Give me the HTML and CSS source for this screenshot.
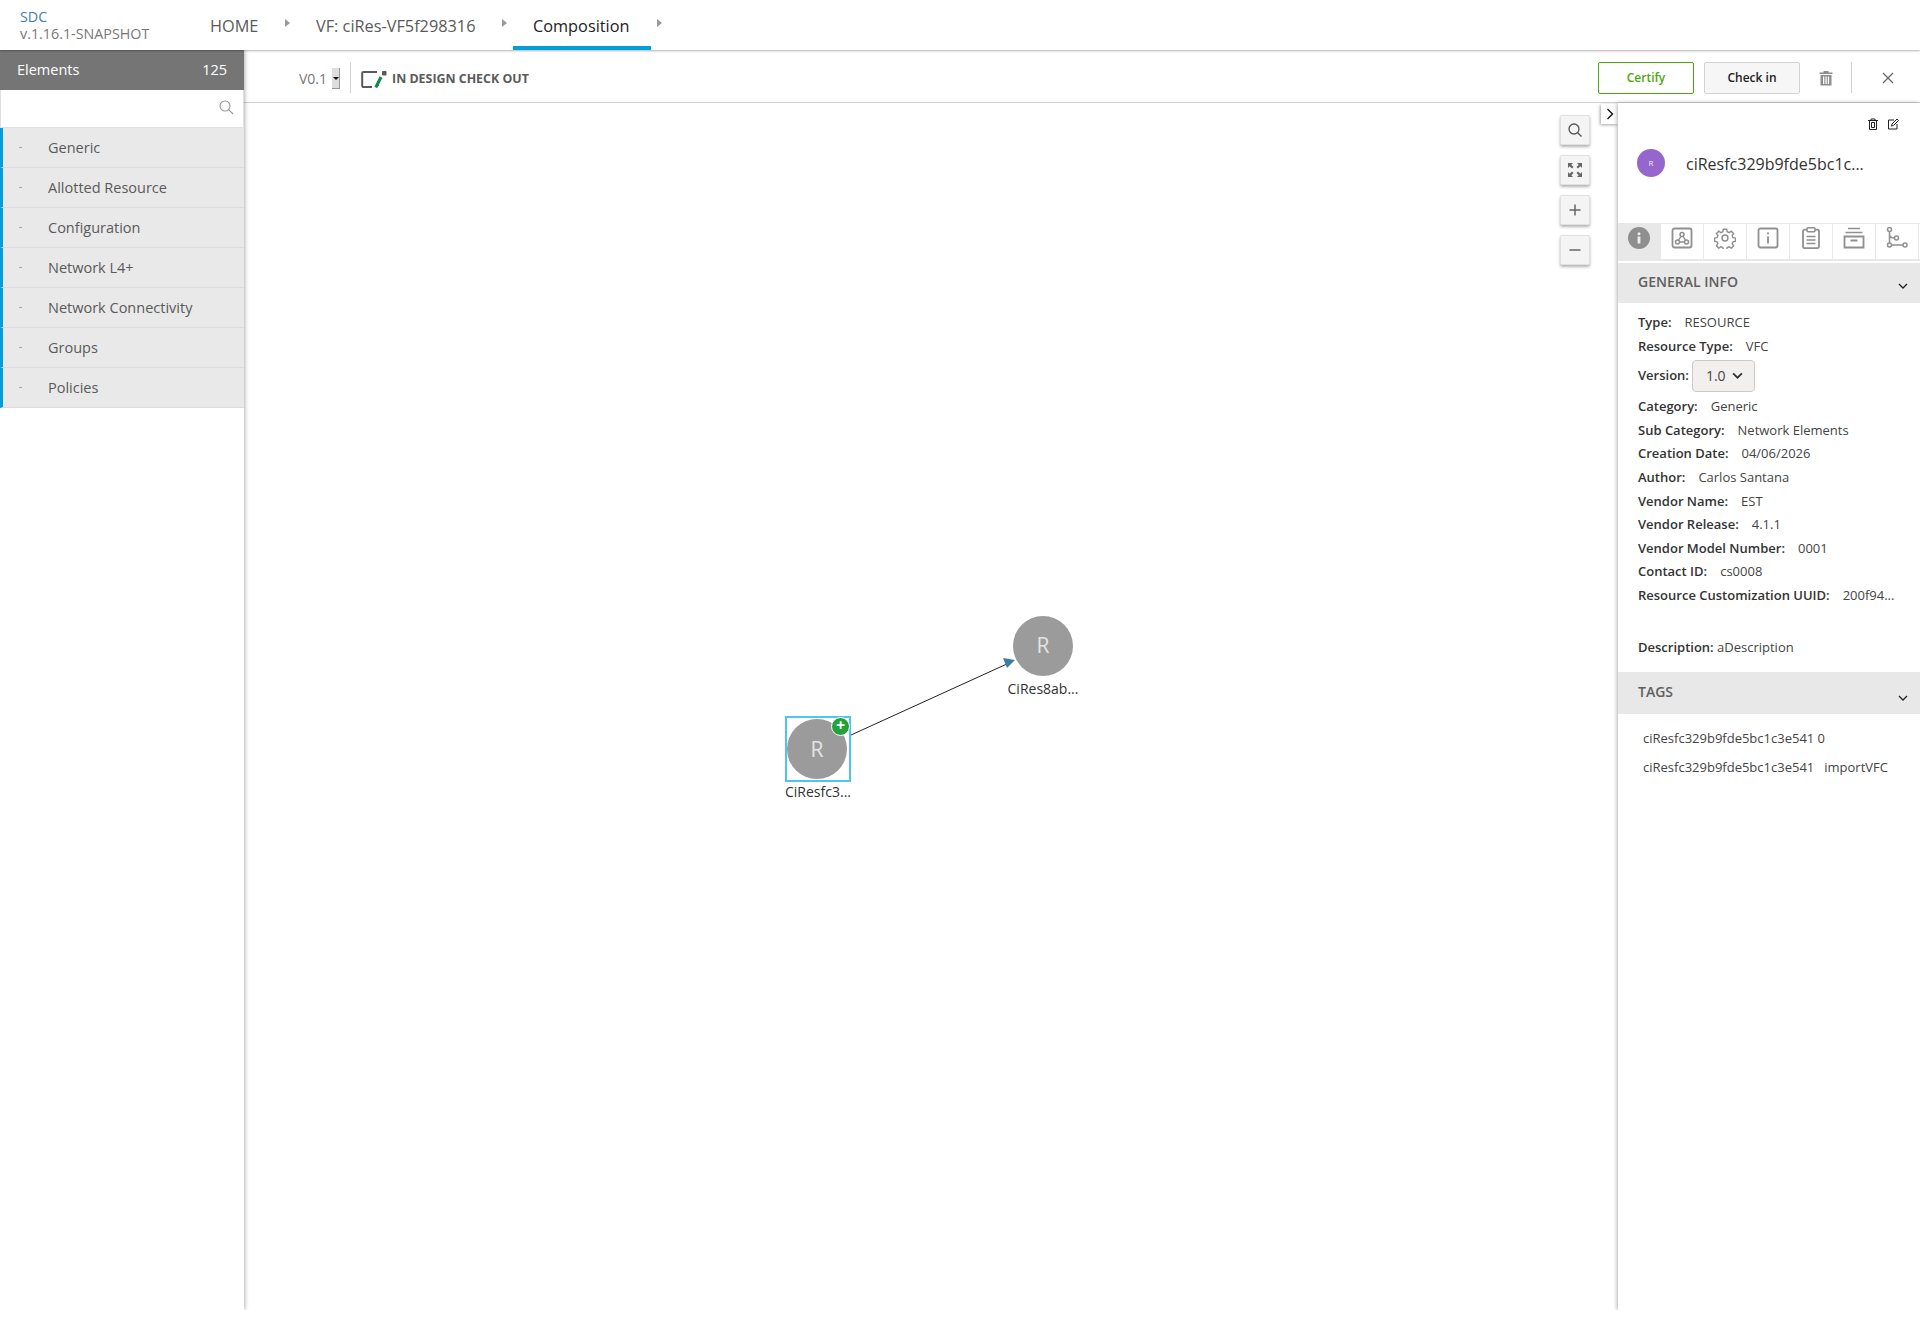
FILE: index.html
```html
<!DOCTYPE html>
<html lang="en">
<head>
<meta charset="utf-8">
<title>SDC Composition</title>
<link rel="stylesheet" href="styles.css">
</head>
<body>
<header class="topnav">
  <div class="brand"><div class="brand-name">SDC</div><div class="brand-ver">v.1.16.1-SNAPSHOT</div></div>
  <nav class="crumbs">
    <a class="crumb crumb-home">HOME</a><span class="crumb-arrow"></span>
    <a class="crumb crumb-vf">VF: ciRes-VF5f298316</a><span class="crumb-arrow"></span>
    <a class="crumb crumb-active">Composition</a><span class="crumb-arrow"></span>
  </nav>
</header>
<div class="main">
  <aside class="palette">
    <div class="palette-head"><span>Elements</span><span>125</span></div>
    <div class="palette-search">
      <svg class="i16" viewBox="0 0 16 16"><circle cx="7" cy="7" r="5" fill="none" stroke="#999" stroke-width="1.1"/><path d="M10.6 10.6 15 15" stroke="#999" stroke-width="1.1"/></svg>
    </div>
    <div class="group"><i class="dash"></i>Generic</div>
    <div class="group"><i class="dash"></i>Allotted Resource</div>
    <div class="group"><i class="dash"></i>Configuration</div>
    <div class="group"><i class="dash"></i>Network L4+</div>
    <div class="group"><i class="dash"></i>Network Connectivity</div>
    <div class="group"><i class="dash"></i>Groups</div>
    <div class="group"><i class="dash"></i>Policies</div>
  </aside>
  <div class="work">
    <div class="toolbar">
      <span class="ver">V0.1</span>
      <span class="ver-select"><i></i></span>
      <span class="tb-sep"></span>
      <svg class="status-icon" viewBox="0 0 26 18"><path d="M16 2H2.500A1.200 1.200 0 0 0 1.200 3.200v12.600A1.200 1.200 0 0 0 2.500 17H11M17 11v5" fill="none" stroke="#5a5a5a" stroke-width="2"/><rect x="21" y="1" width="4.500" height="4.500" rx="1" fill="#5a5a5a"/><path d="M20 7 14.800 17.500" stroke="#0e8a4b" stroke-width="3"/></svg>
      <span class="status-text">IN DESIGN CHECK OUT</span>
      <span class="spacer"></span>
      <button class="btn btn-certify">Certify</button>
      <button class="btn btn-checkin">Check in</button>
      <svg class="tb-trash" viewBox="0 0 14 16"><path d="M0.500 2.500h13V4H.5zM4.500 2.500V1h5v1.500z" fill="#8c8c8c"/><path d="M1.500 5h11v10.500h-11zM4 6.500v7.500h1.300V6.500zM6.400 6.500v7.500h1.300V6.500zM8.800 6.500v7.500h1.300V6.500z" fill="#8c8c8c" fill-rule="evenodd"/></svg>
      <span class="tb-sep tb-sep-right"></span>
      <svg class="tb-close" viewBox="0 0 12 12"><path d="M1 1l10 10M11 1 1 11" stroke="#666" stroke-width="1.300"/></svg>
    </div>
    <div class="stage">
      <div class="canvas">
        <svg class="edge" viewBox="0 0 1373 1207"><path d="M607 632 765 560" stroke="#222" stroke-width="1"/><path d="M771 557 759 555 763 565z" fill="#3d7ca3"/></svg>
        <div class="node node-a"><div class="sel"></div><div class="circle">R</div><span class="plus">+</span><div class="node-label">CiResfc3...</div></div>
        <div class="node node-b"><div class="circle">R</div><div class="node-label">CiRes8ab...</div></div>
        <div class="zoom-stack">
          <div class="zoom-btn"><svg viewBox="0 0 16 16"><circle cx="7" cy="7" r="5" fill="none" stroke="#555" stroke-width="1.300"/><path d="M10.700 10.700 14.500 14.500" stroke="#555" stroke-width="1.300"/></svg></div>
          <div class="zoom-btn"><svg viewBox="0 0 16 16"><path d="M1 1h5L4.300 2.700 6.500 5 5 6.500 2.700 4.300 1 6zM15 1v5l-1.700-1.700L11 6.500 9.500 5l2.200-2.300L10 1zM1 15v-5l1.700 1.700L5 9.500 6.500 11l-2.200 2.300L6 15zM15 15h-5l1.700-1.700L9.500 11 11 9.500l2.300 2.200L15 10z" fill="#666"/></svg></div>
          <div class="zoom-btn"><svg viewBox="0 0 16 16"><path d="M8 2.500v11M2.500 8h11" stroke="#666" stroke-width="1.500"/></svg></div>
          <div class="zoom-btn"><svg viewBox="0 0 16 16"><path d="M2.500 8h11" stroke="#666" stroke-width="1.500"/></svg></div>
        </div>
        <div class="collapse"><svg viewBox="0 0 8 12"><path d="M1.500 1l5 5-5 5" fill="none" stroke="#111" stroke-width="1.400"/></svg></div>
      </div>
      <aside class="details">
        <div class="detail-actions">
          <svg viewBox="0 0 12 12"><path d="M1 2.500h10M4 2.500V1h4v1.500M2.500 2.500v9h7v-9M4.500 4.500h3v5h-3z" fill="none" stroke="#222" stroke-width="1"/></svg>
          <svg viewBox="0 0 12 12"><path d="M7 2H1.500v9h8.500V6" fill="none" stroke="#222" stroke-width="1"/><path d="M4.500 8 5 6l5-5 1.500 1.500-5 5z" fill="none" stroke="#222" stroke-width="1"/></svg>
        </div>
        <div class="detail-title"><span class="avatar">R</span><span class="name">ciResfc329b9fde5bc1c...</span></div>
        <div class="tabs">
          <div class="tab tab-on"><svg viewBox="0 0 22 22"><circle cx="11" cy="11" r="11" fill="#8f8f8f"/><rect x="9.600" y="9.500" width="2.800" height="7" fill="#eee"/><circle cx="11" cy="6.800" r="1.500" fill="#eee"/></svg></div>
          <div class="tab"><svg viewBox="0 0 22 22"><rect x="1.500" y="1.500" width="19" height="19" rx="2" fill="none" stroke="#8f8f8f" stroke-width="1.800"/><circle cx="11" cy="7.500" r="2" fill="none" stroke="#8f8f8f" stroke-width="1.500"/><circle cx="6.500" cy="15" r="2" fill="none" stroke="#8f8f8f" stroke-width="1.500"/><circle cx="15.500" cy="15" r="2" fill="none" stroke="#8f8f8f" stroke-width="1.500"/><path d="M10 9.300 7.500 13.200M12 9.300l2.500 3.900M8.500 15h5" stroke="#8f8f8f" stroke-width="1.300"/></svg></div>
          <div class="tab"><svg viewBox="0 0 24 24"><circle cx="12" cy="12" r="3.200" fill="none" stroke="#8f8f8f" stroke-width="1.600"/><path d="M10 1.500h4l.6 3 2.300 1 2.600-1.700 2.800 2.800-1.700 2.600 1 2.300 3 .6v3.800l-3 .6-1 2.300 1.700 2.600-2.800 2.800-2.600-1.700-2.300 1-.6 3h-4l-.6-3-2.300-1-2.600 1.700-2.800-2.800 1.700-2.600-1-2.300-3-.6v-3.800l3-.6 1-2.300-1.700-2.600 2.800-2.800 2.600 1.700 2.300-1z" transform="translate(1.100 1.100) scale(.91)" fill="none" stroke="#8f8f8f" stroke-width="1.700"/></svg></div>
          <div class="tab"><svg viewBox="0 0 22 22"><rect x="1.500" y="1.500" width="19" height="19" rx="2" fill="none" stroke="#8f8f8f" stroke-width="1.800"/><path d="M11 9.500v7" stroke="#8f8f8f" stroke-width="1.800"/><circle cx="11" cy="6.300" r="1.100" fill="#8f8f8f"/></svg></div>
          <div class="tab"><svg viewBox="0 0 22 22"><path d="M6.500 3.500H4.800A1.800 1.800 0 0 0 3 5.300v14.900A1.800 1.800 0 0 0 4.800 22h12.400a1.800 1.800 0 0 0 1.800-1.800V5.300a1.800 1.800 0 0 0-1.800-1.800h-1.700" transform="translate(0 -.8)" fill="none" stroke="#8f8f8f" stroke-width="1.800"/><rect x="7" y="0.800" width="8" height="4" rx="1" fill="none" stroke="#8f8f8f" stroke-width="1.600"/><path d="M6.500 9.500h9M6.500 13h9M6.500 16.500h9" stroke="#8f8f8f" stroke-width="1.600"/></svg></div>
          <div class="tab"><svg viewBox="0 0 22 22"><path d="M5 1.500h12M2.500 5.500h17" stroke="#8f8f8f" stroke-width="1.700"/><path d="M1.500 9.500h19v11h-19zM7.500 13.500h7" fill="none" stroke="#8f8f8f" stroke-width="1.800"/></svg></div>
          <div class="tab"><svg viewBox="0 0 22 22"><circle cx="3.500" cy="2.500" r="2" fill="none" stroke="#8f8f8f" stroke-width="1.500"/><circle cx="3.500" cy="18" r="2" fill="none" stroke="#8f8f8f" stroke-width="1.500"/><circle cx="10.500" cy="11" r="2" fill="none" stroke="#8f8f8f" stroke-width="1.500"/><circle cx="19" cy="18" r="2" fill="none" stroke="#8f8f8f" stroke-width="1.500"/><path d="M3.500 4.500v11.500M5.500 18H17M3.500 7.500c0 3 3 3.500 5 3.500" fill="none" stroke="#8f8f8f" stroke-width="1.500"/></svg></div>
        </div>
        <div class="section-head section-general"><span>GENERAL INFO</span><svg viewBox="0 0 10 6"><path d="M1 1l4 4 4-4" fill="none" stroke="#222" stroke-width="1.300"/></svg></div>
        <div class="info">
          <div class="row"><b>Type:</b><span>RESOURCE</span></div>
          <div class="row"><b>Resource Type:</b><span>VFC</span></div>
          <div class="row row-version"><b>Version:</b><span class="version-pick">1.0<svg viewBox="0 0 10 6"><path d="M1 1l4 4 4-4" fill="none" stroke="#333" stroke-width="1.600"/></svg></span></div>
          <div class="row"><b>Category:</b><span>Generic</span></div>
          <div class="row"><b>Sub Category:</b><span>Network Elements</span></div>
          <div class="row"><b>Creation Date:</b><span>04/06/2026</span></div>
          <div class="row"><b>Author:</b><span>Carlos Santana</span></div>
          <div class="row"><b>Vendor Name:</b><span>EST</span></div>
          <div class="row"><b>Vendor Release:</b><span>4.1.1</span></div>
          <div class="row"><b>Vendor Model Number:</b><span>0001</span></div>
          <div class="row"><b>Contact ID:</b><span>cs0008</span></div>
          <div class="row"><b>Resource Customization UUID:</b><span>200f94...</span></div>
          <div class="row row-desc"><b>Description:</b> aDescription</div>
        </div>
        <div class="section-head section-tags"><span>TAGS</span><svg viewBox="0 0 10 6"><path d="M1 1l4 4 4-4" fill="none" stroke="#222" stroke-width="1.300"/></svg></div>
        <div class="tags">
          <div class="tag-row"><span>ciResfc329b9fde5bc1c3e541 0</span></div>
          <div class="tag-row"><span>ciResfc329b9fde5bc1c3e541</span><span>importVFC</span></div>
        </div>
      </aside>
    </div>
  </div>
</div>
</body>
</html>
```
FILE: styles.css
```css
* { box-sizing: border-box; }
html, body { margin: 0; height: 100%; background: #fff; overflow: hidden; }
body { font-family: "Open Sans", sans-serif; color: #333; height: 1319px; display: flex; flex-direction: column; }

.topnav { height: 50px; flex: none; display: flex; background: #fff; position: relative; z-index: 3; box-shadow: 0 1px 2px rgba(0,0,0,.3); }
.brand { width: 210px; padding: 8px 0 0 20px; font-size: 14.300px; line-height: 17px; }
.brand-name { color: #3f7fb8; }
.brand-ver { color: #777; }
.crumbs { display: flex; height: 50px; font-size: 16.300px; line-height: 52px; color: #5a5a5a; }
.crumb { display: block; height: 50px; }
.crumb-home { width: 74px; }
.crumb-vf { width: 185px; }
.crumb-active { color: #222; width: 138px; padding-left: 20px; border-bottom: 4px solid #009fdb; line-height: 52px; }
.crumb-arrow { width: 32px; height: 50px; position: relative; }
.crumb-arrow::after { content: ""; position: absolute; left: 1px; top: 19px; border-left: 5px solid #999; border-top: 4.500px solid transparent; border-bottom: 4.500px solid transparent; }
.crumbs .crumb-arrow:nth-child(4) { width: 12px; }
.crumb-active + .crumb-arrow { margin-left: 5px; }

.main { flex: 1; display: flex; height: 1260px; max-height: 1260px; min-height: 0; overflow: hidden; }
.palette { width: 244px; flex: none; background: #fff; box-shadow: 1px 0 4px rgba(0,0,0,.3); position: relative; z-index: 2; }
.palette-head { height: 40px; background: #757575; color: #fff; font-size: 14.500px; display: flex; justify-content: space-between; align-items: center; padding: 0 17px 2px; font-weight: 500; }
.palette-search { height: 38px; background: #fff; display: flex; align-items: center; justify-content: flex-end; padding: 0 9px 4px 0; border: 1px solid #e0e0e0; border-top: 0; }
.i16 { width: 16px; height: 16px; }
.group { height: 40px; background: #e9e9e9; border-left: 3px solid #009fdb; border-bottom: 1px solid #dcdcdc; font-size: 14.500px; color: #5a5a5a; display: flex; align-items: center; font-weight: 500; }
.dash { width: 3px; height: 1px; background: #aaa; margin: 0 26px 0 16px; display: block; }

.work { flex: 1; min-width: 0; display: flex; flex-direction: column; }
.toolbar { height: 53px; flex: none; display: flex; align-items: center; border-bottom: 1px solid #d2d2d2; padding: 3px 26px 0 55px; }
.ver { font-size: 14px; color: #777; margin-top: 2px; }
.ver-select { width: 8px; height: 21px; margin: 2px 0 0 5px; background: #ddd; border-right: 1px solid #999; border-bottom: 1px solid #999; position: relative; display: block; }
.ver-select i { position: absolute; left: 1px; top: 9px; border-top: 3.500px solid #111; border-left: 3px solid transparent; border-right: 3px solid transparent; }
.tb-sep { width: 1px; height: 31px; background: #d2d2d2; margin-left: 10px; display: block; }
.status-icon { width: 26px; height: 18px; margin: 2px 0 0 10px; }
.status-text { font-size: 12.400px; font-weight: 700; color: #5a5a5a; margin: 2px 0 0 5px; }
.spacer { flex: 1; }
.btn { width: 96px; height: 32px; border-radius: 2px; font: 600 12px "Open Sans", sans-serif; padding: 0; }
.btn-certify { background: #fff; color: #4ca90c; border: 1px solid #4ca90c; }
.btn-checkin { background: #f6f6f6; color: #222; border: 1px solid #d2d2d2; margin-left: 10px; }
.tb-trash { width: 14px; height: 16px; margin-left: 19px; }
.tb-sep-right { margin-left: 18px; }
.tb-close { width: 12px; height: 12px; margin-left: 30px; }

.stage { flex: 1; min-height: 0; display: flex; }
.canvas { flex: 1; min-width: 0; position: relative; background: #fff; }
.edge { position: absolute; left: 0; top: 0; width: 1373px; height: 1207px; }
.node { position: absolute; width: 66px; height: 66px; font-size: 14px; }
.node-a { left: 541px; top: 613px; }
.node-b { left: 766px; top: 510px; }
.circle { position: absolute; left: 3px; top: 3px; width: 60px; height: 60px; border-radius: 50%; background: #9b9b9b; color: #e4e4e4; font-size: 21px; text-align: center; line-height: 60px; }
.node-a .circle { left: 2px; }
.node-b .circle { left: 3px; line-height: 58px; }
.sel { position: absolute; inset: 0; border: 2px solid #4cc4f4; }
.plus { position: absolute; left: 46px; top: 1px; width: 17px; height: 17px; border-radius: 50%; background: #23a13a; border: 1px solid #fff; color: #fff; font: 700 16px/15px "Open Sans", sans-serif; text-align: center; box-sizing: content-box; }
.node-label { position: absolute; top: 64px; left: -20px; width: 106px; text-align: center; font-size: 14px; line-height: 24px; color: #333; }
.zoom-stack { position: absolute; right: 28px; top: 12px; display: flex; flex-direction: column; gap: 10px; }
.zoom-btn { width: 30px; height: 30px; background: #f4f4f4; border: 1px solid #e0e0e0; border-radius: 2px; box-shadow: 0 2px 3px rgba(0,0,0,.3); display: flex; align-items: center; justify-content: center; }
.zoom-btn svg { width: 16px; height: 16px; }
.collapse { position: absolute; right: 0; top: 1px; width: 17px; height: 20px; background: #fff; box-shadow: -1px 1px 3px rgba(0,0,0,.35); display: flex; align-items: center; justify-content: center; }
.collapse svg { width: 8px; height: 12px; }

.details { width: 302px; flex: none; background: #fff; box-shadow: -1px 0 4px rgba(0,0,0,.3); position: relative; z-index: 1; }
.detail-actions { height: 39px; display: flex; justify-content: flex-end; align-items: flex-start; gap: 8px; padding: 15px 21px 0 0; }
.detail-actions svg { width: 12px; height: 12px; }
.detail-title { height: 81px; display: flex; align-items: flex-start; padding: 0 0 0 19px; }
.avatar { width: 28px; height: 28px; border-radius: 50%; background: #9666cc; color: #f0e6ff; font-size: 8px; line-height: 28px; text-align: center; margin-top: 7px; }
.name { font-size: 16px; margin-left: 21px; line-height: 24px; margin-top: 10px; color: #333; }
.tabs { height: 38px; display: flex; border-top: 1px solid #e8e8e8; border-bottom: 2px solid #e8e8e8; }
.tab { width: 43px; display: flex; justify-content: center; padding-top: 3px; border-right: 1px solid #e8e8e8; }
.tab svg { width: 22px; height: 22px; }
.tab-on { background: #e8e8e8; }
.section-head { background: #e8e8e8; display: flex; justify-content: space-between; font-size: 14px; font-weight: 600; color: #5f5f5f; padding: 9px 12px 0 20px; position: relative; }
.section-head svg { width: 10px; height: 6px; margin-top: 11px; }
.section-general { height: 40px; margin-top: 2px; }
.section-tags { height: 42px; padding-top: 10px; }
.section-tags svg { margin-top: 13px; }
.info { height: 369px; padding: 8px 0 0 20px; font-size: 13px; color: #444; }
.row { height: 23.600px; line-height: 23.600px; display: flex; gap: 13px; white-space: nowrap; }
.row b { font-weight: 600; color: #333; }
.row-version { height: 37px; line-height: 35px; gap: 3px; align-items: center; padding-bottom: 2px; }
.version-pick { width: 63px; height: 32px; border: 1px solid #cfcac6; border-radius: 4px; background: #f2f0ee; font-size: 14px; line-height: 30px; padding-left: 13px; display: flex; align-items: center; gap: 6px; }
.version-pick svg { width: 11px; height: 7px; }
.row-desc { display: block; margin-top: 28px; }
.tags { padding: 13px 0 0 25px; font-size: 13px; color: #444; }
.tag-row { height: 29px; line-height: 23px; display: flex; gap: 10px; }
```
